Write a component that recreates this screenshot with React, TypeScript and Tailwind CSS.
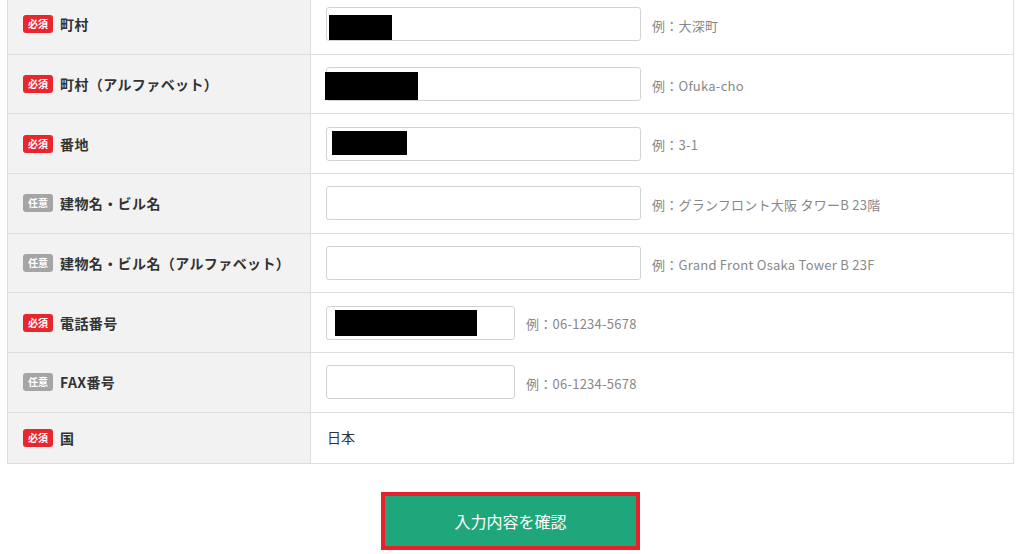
import React from "react";

type Row = {
  req: boolean;
  label: string;
  kind: "input" | "text";
  width?: "long" | "short";
  redact?: { left: number; top: number; w: number; h: number };
  hint?: string;
  value?: string;
};

const rows: Row[] = [
  { req: true, label: "町村", kind: "input", width: "long", redact: { left: 2, top: 7, w: 63, h: 25 }, hint: "例：大深町" },
  { req: true, label: "町村（アルファベット）", kind: "input", width: "long", redact: { left: -2, top: 4, w: 93, h: 28 }, hint: "例：Ofuka-cho" },
  { req: true, label: "番地", kind: "input", width: "long", redact: { left: 5, top: 3, w: 75, h: 24 }, hint: "例：3-1" },
  { req: false, label: "建物名・ビル名", kind: "input", width: "long", hint: "例：グランフロント大阪 タワーB 23階" },
  { req: false, label: "建物名・ビル名（アルファベット）", kind: "input", width: "long", hint: "例：Grand Front Osaka Tower B 23F" },
  { req: true, label: "電話番号", kind: "input", width: "short", redact: { left: 8, top: 3, w: 142, h: 26 }, hint: "例：06-1234-5678" },
  { req: false, label: "FAX番号", kind: "input", width: "short", hint: "例：06-1234-5678" },
  { req: true, label: "国", kind: "text", value: "日本" },
];

const font = { fontFamily: '"Noto Sans CJK JP", "Noto Sans", sans-serif' };

export default function App() {
  return (
    <div className="w-[1024px] h-[554px] overflow-hidden bg-white" style={font}>
      <div className="ml-[7px] w-[1007px] mt-[-6px] border border-[#dedede] border-b-0">
        {rows.map((r, i) => (
          <div
            key={i}
            className={`grid grid-cols-[303px_1fr] border-b border-[#dedede] ${r.kind === "input" ? "h-[59.67px]" : "h-[51px]"}`}
          >
            <div className="bg-[#f2f2f2] border-r border-[#dedede] flex items-center pl-[15px]">
              <span
                className={`w-[30px] h-[18px] rounded-[3px] flex items-center justify-center text-white text-[10px] font-bold leading-none ${r.req ? "bg-[#e8262b]" : "bg-[#a5a5a5]"}`}
              >
                {r.req ? "必須" : "任意"}
              </span>
              <span className="ml-[7px] text-[14px] font-bold text-[#333333] leading-[26px] tracking-[0.4px]">{r.label}</span>
            </div>
            <div className="flex items-center pl-[15px]">
              {r.kind === "input" ? (
                <>
                  <div
                    className={`relative h-[34px] bg-white border border-[#d2d2d2] rounded-[3px] ${r.width === "long" ? "w-[315px]" : "w-[189px]"}`}
                  >
                    {r.redact && (
                      <div
                        className="absolute bg-black"
                        style={{ left: r.redact.left, top: r.redact.top, width: r.redact.w, height: r.redact.h }}
                      />
                    )}
                  </div>
                  <span className="ml-[11px] text-[13px] text-[#888888] mt-[3px] tracking-[0.25px]">{r.hint}</span>
                </>
              ) : (
                <span className="text-[14px] text-[#333333] pl-[1px]">{r.value}</span>
              )}
            </div>
          </div>
        ))}
      </div>
      <div className="flex justify-center mt-[28px]">
        <button
          className="mr-[3px] w-[259px] h-[58px] border-4 border-[#e8202a] bg-[#1fa67b] text-white text-[16px] flex items-center justify-center"
          style={font}
        >
          入力内容を確認
        </button>
      </div>
    </div>
  );
}
